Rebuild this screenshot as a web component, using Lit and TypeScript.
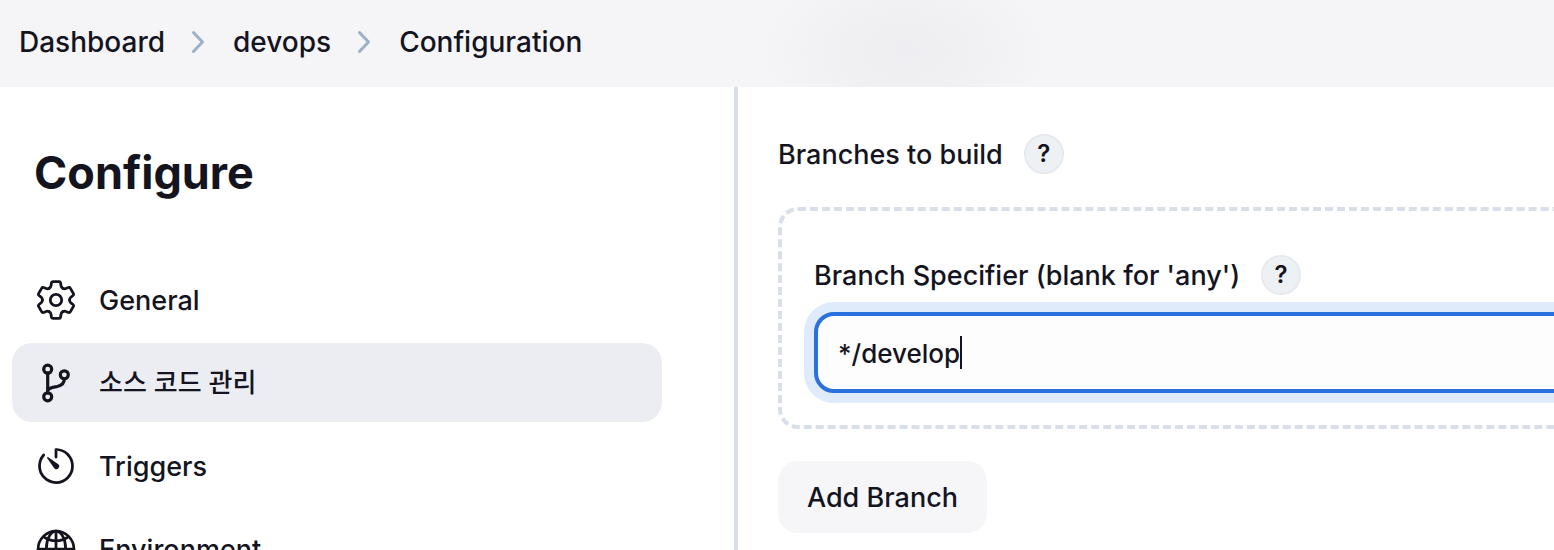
import { LitElement, html, css, svg } from "lit";
import { customElement, property, state } from "lit/decorators.js";
import { classMap } from "lit/directives/class-map.js";

const gear = svg`
  ${[0, 60, 120, 180, 240, 300].map((a) => svg`<path transform="rotate(${a} 22 22)" d="M15.200 10.200Q16.800 9.300 17 7.800L17.400 5Q17.600 3.700 18.800 3.700H25.200Q26.400 3.700 26.600 5L27 7.800Q27.200 9.300 28.800 10.200"/>`)}
  <circle cx="22" cy="22" r="5.700"/>`;

const branch = svg`<g stroke-width="3.200">
  <circle cx="13.700" cy="8.200" r="4"/>
  <circle cx="13.700" cy="35.800" r="4"/>
  <circle cx="30.300" cy="13.800" r="4"/>
  <path d="M13.700 12.200v19.600M30.300 18c0 4.500-2.500 6.500-7 7.500s-9 1.300-9.600 4.500"/></g>`;

const timer = svg`<g transform="scale(.0859375)" stroke-width="32">
  <path d="M112.910 128A191.850 191.850 0 0 0 64 254c-1.180 106.350 85.650 193.800 192 194 106.200.2 192-85.830 192-192 0-104.540-83.550-189.610-187.500-192a4.360 4.360 0 0 0-4.500 4.370V152"/>
  <path fill="currentColor" stroke="none" d="M233.380 278.630l-79-113a8.130 8.130 0 0 1 11.320-11.320l113 79a32.500 32.500 0 0 1-37.250 53.260 33.210 33.210 0 0 1-8.070-7.940z"/></g>`;

const globe = svg`<g transform="scale(.0859375)" stroke-width="32">
  <circle cx="256" cy="256" r="208"/>
  <ellipse cx="256" cy="256" rx="112.670" ry="208"/>
  <path d="M117.330 117.330c38.240 27.150 86.380 43.340 138.670 43.340s100.430-16.190 138.670-43.340M394.670 394.670c-38.240-27.150-86.380-43.340-138.670-43.340s-100.430 16.190-138.670 43.340M256 48v416M464 256H48"/></g>`;

const sections = [
  { id: "general", label: "General", lang: "en", icon: gear },
  { id: "scm", label: "소스 코드 관리", lang: "ko", icon: branch },
  { id: "triggers", label: "Triggers", lang: "en", icon: timer },
  { id: "environment", label: "Environment", lang: "en", icon: globe },
];

@customElement("help-button")
class HelpButton extends LitElement {
  @property() label = "";

  static styles = css`
    :host { display: inline-flex; }
    .help {
      width: 40px;
      height: 40px;
      padding: 0;
      border: 2px solid #e6eaf0;
      border-radius: 50%;
      background: #eef1f4;
      color: #14141f;
      font: 600 24px/36px Inter, sans-serif;
      text-align: center;
    }
  `;

  render() {
    return html`<button class="help" type="button" aria-label="Help: ${this.label}">?</button>`;
  }
}

@customElement("app-root")
class AppRoot extends LitElement {
  @state() private active = "scm";

  static styles = css`
    :host {
      display: flex;
      flex-direction: column;
      height: 100vh;
      overflow: hidden;
      background: #fff;
      color: #14141f;
      font: 500 27px/36px Inter, "Noto Sans CJK KR", sans-serif;
    }
    * { box-sizing: border-box; }
    a { color: inherit; text-decoration: none; }
    .crumbs {
      flex: none;
      padding: 24px 19px 27px;
      background:
        radial-gradient(ellipse 145px 90px at 905px 52px, #eeeef2, #f0f0f3 40%, #f5f5f8) no-repeat,
        #f5f5f8;
      font-size: 28px;
    }
    .trail {
      display: flex;
      align-items: center;
      gap: 26px;
      margin: 0;
      padding: 0;
      list-style: none;
    }
    .crumb { display: flex; align-items: center; gap: 26px; }
    .chevron { display: block; width: 16px; height: 24px; fill: none; stroke: #9bb0c9; stroke-width: 3; stroke-linecap: round; stroke-linejoin: round; }
    .body { flex: 1; display: flex; min-height: 0; overflow: hidden; }
    .side { flex: none; width: 738px; padding: 56px 72px 0 12px; border-right: 4px solid #d9dfe8; }
    .title { margin: 0 0 57px; padding-left: 22px; font-size: 45px; line-height: 60px; font-weight: 700; }
    .menu { display: flex; flex-direction: column; gap: 4px; margin: 0; padding: 0; list-style: none; }
    .item { display: flex; align-items: center; gap: 21px; height: 79px; padding: 0 22px; border-radius: 20px; }
    .item.active { background: #ecedf3; }
    .text { padding-top: 2px; }
    .text:lang(ko) { padding-top: 0; font-size: 26px; }
    .icon { flex: none; width: 44px; height: 44px; fill: none; stroke: currentColor; stroke-width: 2.8; stroke-linecap: round; stroke-linejoin: round; }
    .main { flex: 1; min-width: 0; padding: 47px 0 0 40px; }
    .row { display: flex; align-items: center; gap: 21px; white-space: nowrap; }
    .group {
      margin: 33px -80px 32px 0;
      padding: 44px 32px 32px;
      border: 4px dashed #d9dfe8;
      border-radius: 20px;
    }
    .control { position: relative; margin-top: 17px; }
    .field {
      display: block;
      width: 100%;
      height: 81px;
      padding: 2px 20px 0;
      border: 4px solid #2a70de;
      border-radius: 20px;
      outline: none;
      background: #fdfdfe;
      box-shadow: 0 0 0 10px #dfebfb;
      color: inherit;
      font: inherit;
      font-size: 26px;
      caret-color: transparent;
    }
    .caret { position: absolute; left: 146px; top: 24px; width: 2px; height: 33px; background: #14141f; pointer-events: none; }
    .add {
      height: 72px;
      padding: 2px 29px 0;
      border: 0;
      border-radius: 20px;
      background: #f6f6f9;
      color: inherit;
      font: inherit;
    }
  `;

  firstUpdated() {
    const field = this.renderRoot.querySelector("input") as HTMLInputElement;
    field.setSelectionRange(field.value.length, field.value.length);
  }

  render() {
    return html`
      <nav class="crumbs" aria-label="Breadcrumb">
        <ol class="trail">
          ${["Dashboard", "devops", "Configuration"].map((name, i) => html`
            <li class="crumb">
              ${i ? html`<svg class="chevron" viewBox="0 0 16 24" aria-hidden="true"><path d="M2.500 2.500L11.500 12L2.500 21.500"/></svg>` : ""}
              <a href="#${name}">${name}</a>
            </li>`)}
        </ol>
      </nav>
      <div class="body">
        <aside class="side">
          <h1 class="title">Configure</h1>
          <ul class="menu">
            ${sections.map((s) => html`
              <li>
                <a class=${classMap({ item: true, active: s.id === this.active })} href="#${s.id}" @click=${() => (this.active = s.id)}>
                  <svg class="icon" viewBox="0 0 44 44" aria-hidden="true">${s.icon}</svg>
                  <span class="text" lang=${s.lang}>${s.label}</span>
                </a>
              </li>`)}
          </ul>
        </aside>
        <main class="main">
          <div class="row"><span class="text">Branches to build</span><help-button label="Branches to build"></help-button></div>
          <div class="group">
            <div class="row">
              <label class="text" for="spec">Branch Specifier (blank for 'any')</label>
              <help-button label="Branch Specifier"></help-button>
            </div>
            <div class="control">
              <input class="field" id="spec" type="text" autocomplete="off" spellcheck="false" .value=${"*/develop"}>
              <span class="caret"></span>
            </div>
          </div>
          <button class="add" type="button">Add Branch</button>
        </main>
      </div>`;
  }
}
